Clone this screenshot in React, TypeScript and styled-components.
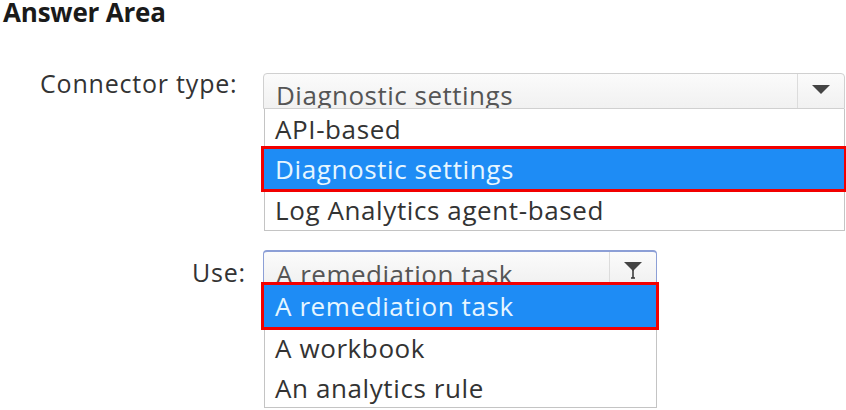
import React from "react";
import styled, { createGlobalStyle } from "styled-components";

const Global = createGlobalStyle`
  html, body { margin: 0; padding: 0; background: #ffffff; }
  body { font-family: "Open Sans", "Noto Sans", sans-serif; color: #333; }
`;

const Page = styled.div`
  width: 846px;
  height: 410px;
  overflow: hidden;
`;

const Title = styled.h1`
  margin: 0;
  padding-left: 3px;
  font-family: "Open Sans", sans-serif;
  font-size: 26px;
  font-weight: 700;
  color: #1a1a1a;
  line-height: 24px;
  letter-spacing: -0.2px;
`;

const Row = styled.div<{ $top: number }>`
  display: grid;
  grid-template-columns: 263px auto;
  align-items: start;
  margin-top: ${(p) => p.$top}px;
`;

const Label = styled.div<{ $indent: number; $shift: number }>`
  padding-left: ${(p) => p.$indent}px;
  margin-top: ${(p) => p.$shift}px;
  font-size: 25px;
  line-height: 28px;
  letter-spacing: 0.8px;
  color: #333;
  white-space: nowrap;
`;

const Dropdown = styled.div<{ $width: number }>`
  width: ${(p) => p.$width}px;
  display: flex;
  flex-direction: column;
`;

const Select = styled.div<{ $focused?: boolean }>`
  height: ${(p) => (p.$focused ? 31 : 34)}px;
  display: flex;
  border: 1px solid ${(p) => (p.$focused ? "#8c9fd6" : "#d0d0d0")};
  border-top-width: ${(p) => (p.$focused ? 2 : 1)}px;
  border-radius: 4px 4px 0 0;
  background: linear-gradient(#fbfbfb, #f1f1f1);
  overflow: hidden;
`;

const SelectText = styled.div<{ $pad: number }>`
  flex: 1;
  padding: ${(p) => p.$pad}px 0 0 12px;
  font-size: 26px;
  line-height: 30px;
  letter-spacing: 0.5px;
  color: #555;
  white-space: nowrap;
  overflow: hidden;
`;

const ArrowButton = styled.div`
  width: 46px;
  border-left: 1px solid #dcdcdc;
  display: flex;
  align-items: center;
  justify-content: center;
`;

const List = styled.div`
  border: 1px solid #c4c4c4;
  border-top: none;
  background: #fff;
  display: flex;
  flex-direction: column;
  margin-left: 1px;
`;

const Item = styled.div<{ $selected?: boolean; $h: number }>`
  height: ${(p) => p.$h}px;
  display: flex;
  align-items: center;
  font-size: 26px;
  letter-spacing: 0.6px;
  color: ${(p) => (p.$selected ? "#e6f6ff" : "#333")};
  background: ${(p) => (p.$selected ? "#1e8cf5" : "transparent")};
  outline: ${(p) => (p.$selected ? "3px solid #f20000" : "none")};
  outline-offset: -1px;
  position: relative;
  z-index: ${(p) => (p.$selected ? 1 : 0)};
  white-space: nowrap;
  margin: ${(p) => (p.$selected ? "0 -1px 0 -2px" : "0")};
  padding-left: ${(p) => (p.$selected ? 12 : 10)}px;
`;

const Arrow = ({ cursor }: { cursor?: boolean }) => (
  <svg width="24" height="24" viewBox="0 0 24 24">
    <path d="M3 6 L21 6 L12 15 Z" fill="#444" />
    {cursor && <path d="M12 14 L12 22 M10 22 L14 22" stroke="#333" strokeWidth="1.5" />}
  </svg>
);

export default function App() {
  return (
    <Page>
      <Global />
      <Title>Answer Area</Title>
      <Row $top={49}>
        <Label $indent={40} $shift={-4}>Connector type:</Label>
        <Dropdown $width={582}>
          <Select>
            <SelectText $pad={6}>Diagnostic settings</SelectText>
            <ArrowButton>
              <Arrow />
            </ArrowButton>
          </Select>
          <List>
            <Item $h={39}>API-based</Item>
            <Item $h={42} $selected>Diagnostic settings</Item>
            <Item $h={40}>Log Analytics agent-based</Item>
          </List>
        </Dropdown>
      </Row>
      <Row $top={19}>
        <Label $indent={192} $shift={8}>Use:</Label>
        <Dropdown $width={394}>
          <Select $focused>
            <SelectText $pad={7}>A remediation task</SelectText>
            <ArrowButton>
              <Arrow cursor />
            </ArrowButton>
          </Select>
          <List>
            <Item $h={44} $selected>A remediation task</Item>
            <Item $h={40}>A workbook</Item>
            <Item $h={39}>An analytics rule</Item>
          </List>
        </Dropdown>
      </Row>
    </Page>
  );
}
